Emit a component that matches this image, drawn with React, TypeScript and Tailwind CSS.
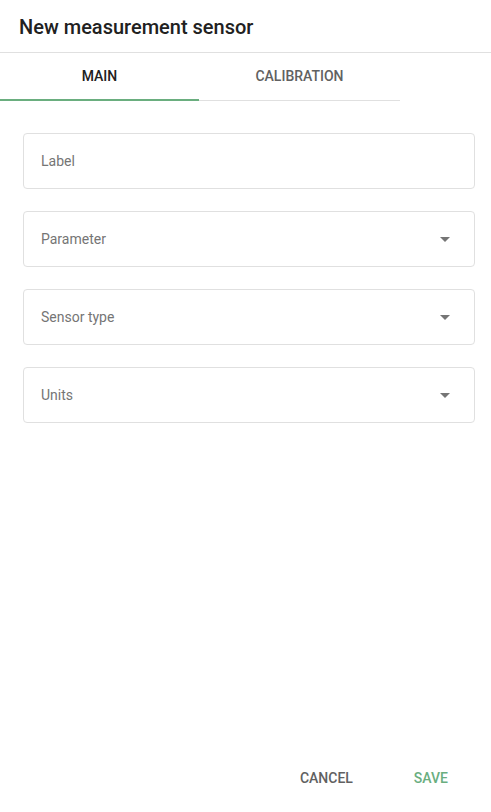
import React from 'react';

function Arrow() {
  return (
    <svg width="10" height="5" viewBox="0 0 10 5" className="text-[#757575]">
      <path d="M0 0 L10 0 L5 5 Z" fill="currentColor" />
    </svg>
  );
}

function Field({ label, select = false }: { label: string; select?: boolean }) {
  return (
    <div className="flex h-[56px] w-[452px] items-center justify-between rounded border border-[#e0e0e0] pl-[17px] pr-[24px]">
      <span className="text-[14px] text-[#757575]">{label}</span>
      {select && <Arrow />}
    </div>
  );
}

export default function App() {
  return (
    <div
      className="flex h-[812px] w-[491px] flex-col bg-white"
      style={{ fontFamily: 'Roboto, "Liberation Sans", sans-serif' }}
    >
      {/* header */}
      <div className="flex h-[53px] items-center border-b border-[#e0e0e0] px-[19px] pt-[1px]">
        <h1 className="text-[20px] font-medium text-[#212121]">New measurement sensor</h1>
      </div>

      {/* tabs */}
      <div className="flex w-[400px] border-b border-[#e0e0e0]">
        <div className="relative flex h-[47px] w-[199px] items-center justify-center">
          <span className="text-[14px] font-medium text-[#212121]">MAIN</span>
          <div className="absolute bottom-[-1px] left-0 right-0 h-[2px] bg-[#6aae7f]" />
        </div>
        <div className="flex h-[47px] flex-1 items-center justify-center">
          <span className="text-[14px] font-medium text-[#616161]">CALIBRATION</span>
        </div>
      </div>

      {/* form */}
      <div className="flex flex-col gap-[22px] pl-[23px] pt-[32px]">
        <Field label="Label" />
        <Field label="Parameter" select />
        <Field label="Sensor type" select />
        <Field label="Units" select />
      </div>

      {/* actions */}
      <div className="mt-auto flex justify-end gap-[29px] pb-[16px] pr-[27px]">
        <button className="flex h-[36px] items-center px-[16px] text-[14px] font-medium text-[#616161]">
          CANCEL
        </button>
        <button className="flex h-[36px] items-center px-[16px] text-[14px] font-medium text-[#6aae7f]">
          SAVE
        </button>
      </div>
    </div>
  );
}
